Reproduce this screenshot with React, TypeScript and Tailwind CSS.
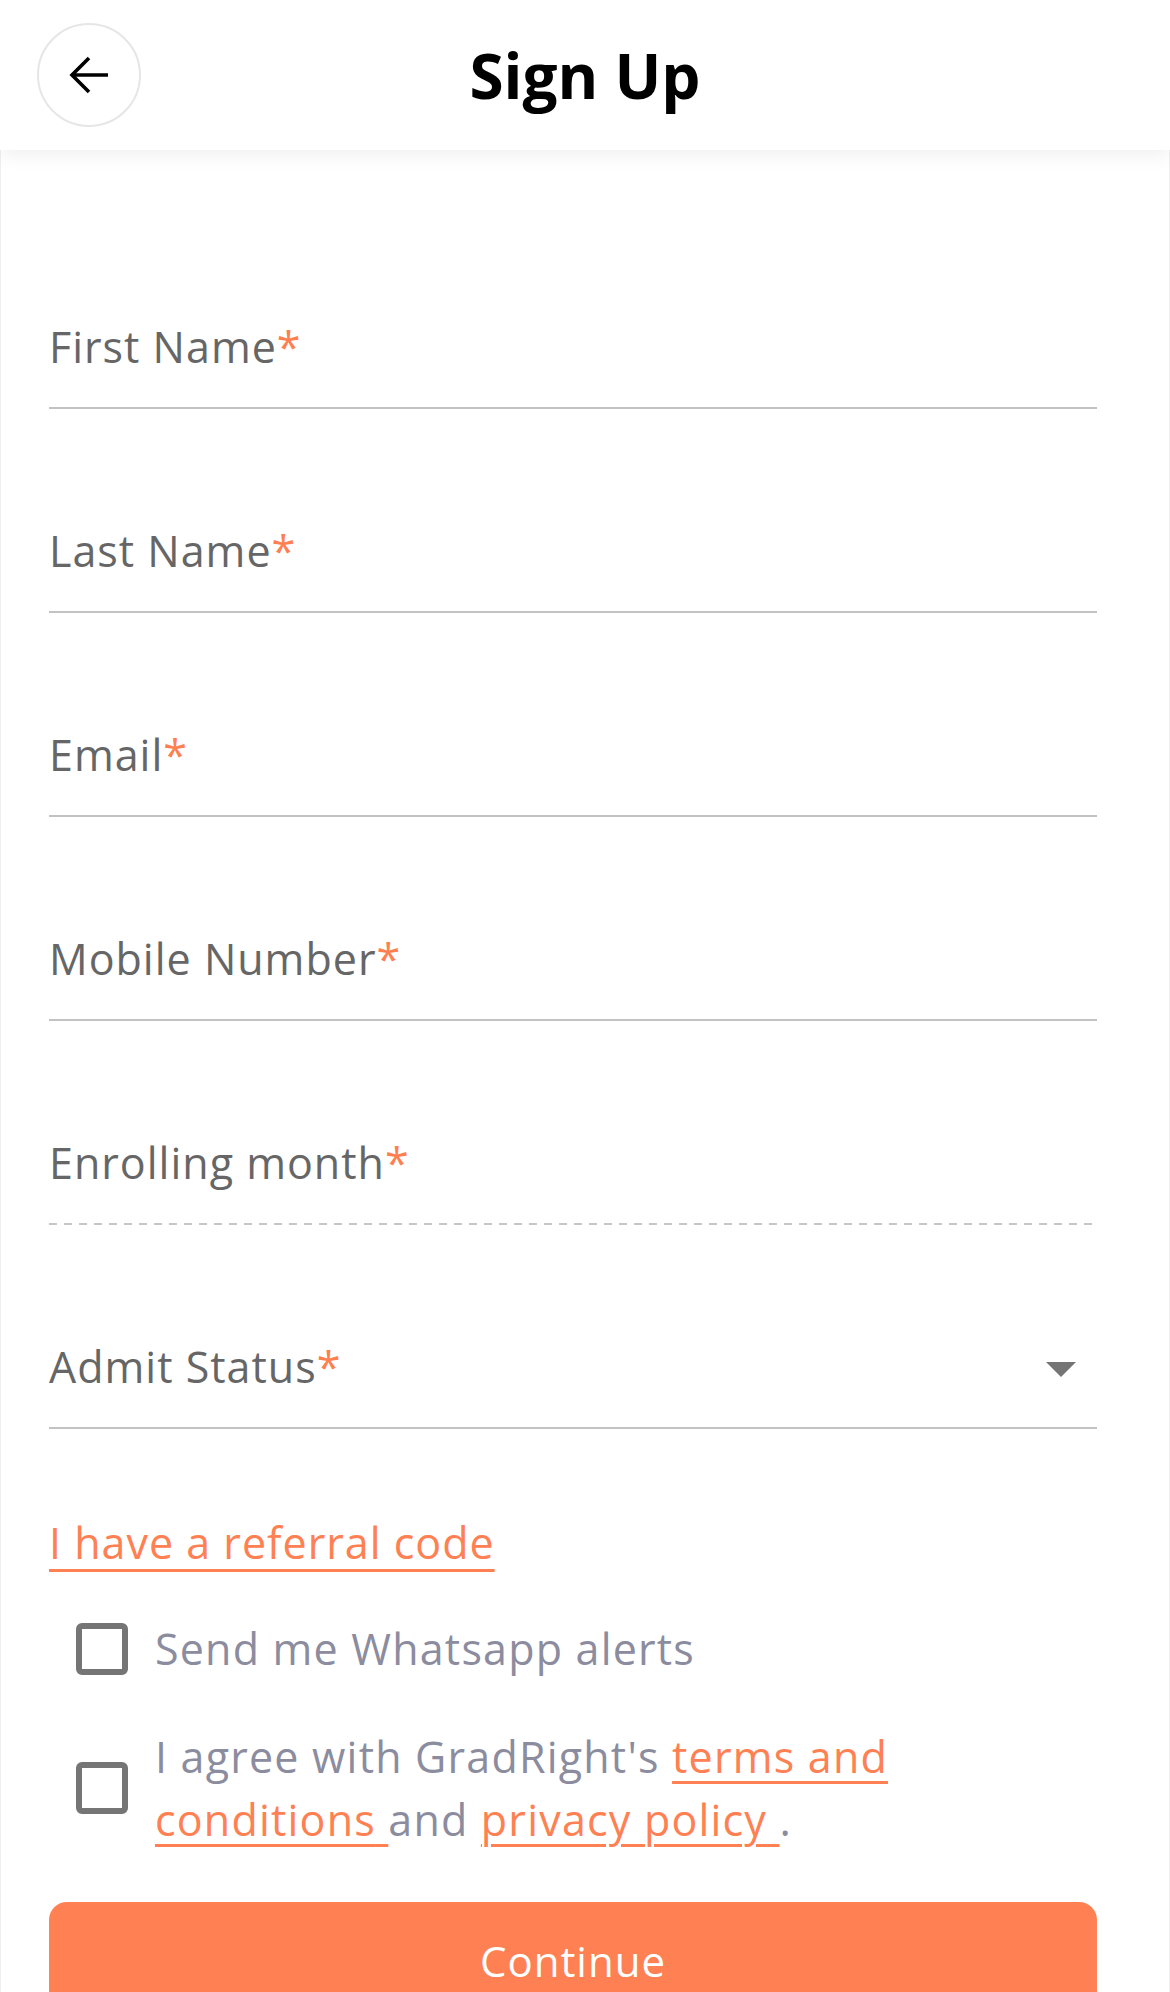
import { useState } from "react";

const font = { fontFamily: "'Open Sans', 'Liberation Sans', sans-serif" };

const fields = [
  { label: "First Name", dashed: false, select: false },
  { label: "Last Name", dashed: false, select: false },
  { label: "Email", dashed: false, select: false },
  { label: "Mobile Number", dashed: false, select: false },
  { label: "Enrolling month", dashed: true, select: false },
  { label: "Admit Status", dashed: false, select: true },
];

function Checkbox({ checked, onToggle }: { checked: boolean; onToggle: () => void }) {
  return (
    <button
      onClick={onToggle}
      className="w-[52px] h-[52px] shrink-0 rounded-[6px] border-[6px] border-[#757575] bg-white"
      aria-checked={checked}
      role="checkbox"
    />
  );
}

export default function App() {
  const [whatsapp, setWhatsapp] = useState(false);
  const [agree, setAgree] = useState(false);

  return (
    <div className="min-h-screen bg-white text-[#666666]" style={font}>
      {/* Header */}
      <header className="relative z-10 h-[150px] bg-white flex items-center justify-center shadow-[0_6px_18px_rgba(0,0,0,0.06)]">
        <button className="absolute left-[37px] top-[23px] w-[104px] h-[104px] rounded-full border-2 border-[#e6e6e6] flex items-center justify-center">
          <svg width="40" height="40" viewBox="0 0 40 40" fill="none" stroke="#000" strokeWidth="3.6">
            <path d="M39 20H4" />
            <path d="M20 3L3 20l17 17" />
          </svg>
        </button>
        <h1 className="text-[62px] font-bold text-black leading-none">Sign Up</h1>
      </header>

      {/* Form */}
      <main className="border-x border-[#efefef] pt-[55px] pl-[48px] pr-[72px] pb-10">
        {fields.map((f) => (
          <div
            key={f.label}
            className={
              f.dashed
                ? "h-[204px] flex items-end justify-between pb-[36px] bg-[linear-gradient(to_right,#c6c6c6_8px,transparent_8px)] bg-[length:15px_2px] bg-left-bottom bg-repeat-x"
                : "h-[204px] flex items-end justify-between pb-[34px] border-b-2 border-[#c2c2c2]"
            }
          >
            <span className="text-[43px] leading-[1.2] tracking-[1px]">
              {f.label}
              <span className="text-[#ff7f50]">*</span>
            </span>
            {f.select && (
              <svg width="30" height="15" viewBox="0 0 30 15" className="mb-[16px] mr-[21px]">
                <path d="M0 0h30L15 15z" fill="#757575" />
              </svg>
            )}
          </div>
        ))}

        <a
          href="#"
          className="inline-block mt-[88px] text-[43px] leading-[1.2] tracking-[1px] text-[#ff8052] underline decoration-[3px] underline-offset-[10px]"
        >
          I have a referral code
        </a>

        <div className="mt-[54px] pl-[27px] flex items-center gap-[27px]">
          <Checkbox checked={whatsapp} onToggle={() => setWhatsapp(!whatsapp)} />
          <span className="text-[43px] leading-[1.2] tracking-[1.2px] text-[#8c8c9f]">Send me Whatsapp alerts</span>
        </div>

        <div className="mt-[50px] pl-[27px] flex items-center gap-[27px]">
          <Checkbox checked={agree} onToggle={() => setAgree(!agree)} />
          <p className="text-[43px] leading-[63px] tracking-[1.2px] text-[#8c8c9f]">
            I agree with GradRight's{" "}
            <a href="#" className="text-[#ff8052] underline decoration-[3px] underline-offset-[8px]">
              terms and
              <br />
              conditions{" "}
            </a>
            and{" "}
            <a href="#" className="text-[#ff8052] underline decoration-[3px] underline-offset-[8px]">
              privacy policy{" "}
            </a>
            .
          </p>
        </div>

        <button className="mt-[51px] w-full h-[118px] rounded-[18px] bg-[#ff8052] text-white text-[42px] font-medium tracking-[1px]">
          Continue
        </button>
      </main>
    </div>
  );
}
